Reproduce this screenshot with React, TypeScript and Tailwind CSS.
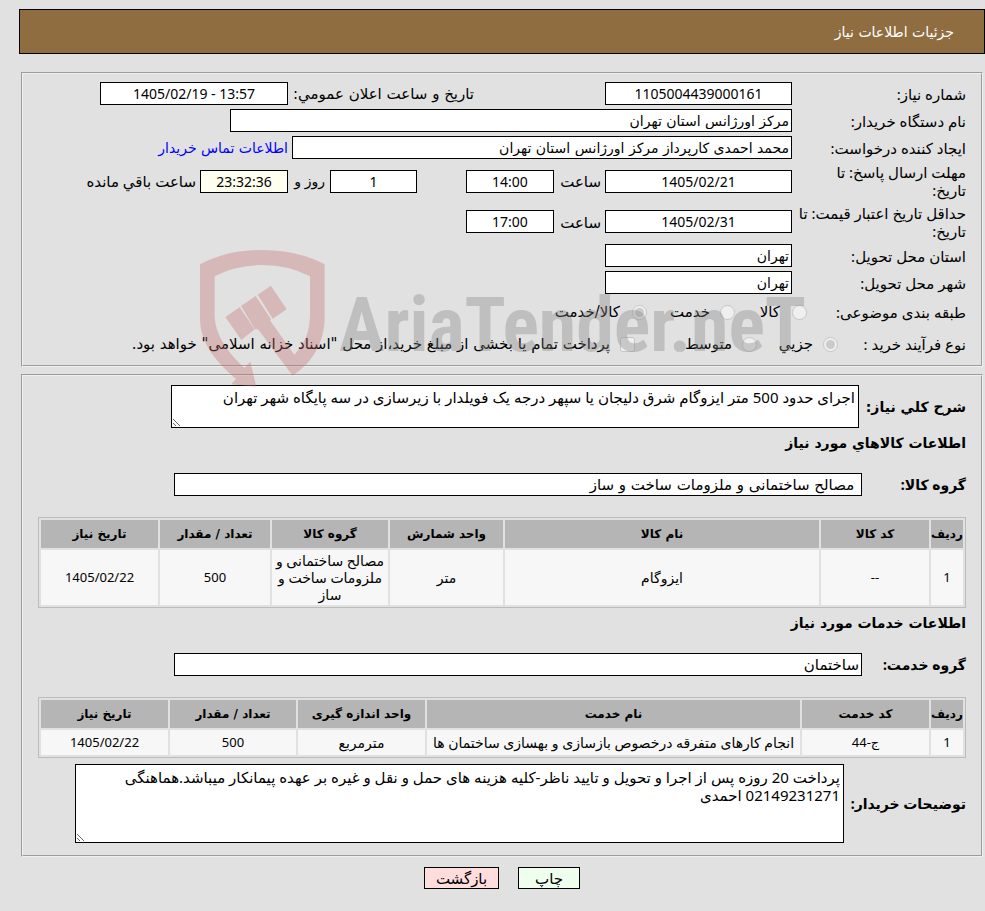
import React from 'react';
import { clsx } from 'clsx';

interface Column {
  title: string;
  width: string;
  numeric?: boolean;
}

const goodsColumns: Column[] = [
  { title: 'ردیف', width: 'w-[32px]', numeric: true },
  { title: 'کد کالا', width: 'w-[108px]', numeric: true },
  { title: 'نام کالا', width: '' },
  { title: 'واحد شمارش', width: 'w-[113px]' },
  { title: 'گروه کالا', width: 'w-[116px]' },
  { title: 'تعداد / مقدار', width: 'w-[110px]', numeric: true },
  { title: 'تاریخ نیاز', width: 'w-[117px]', numeric: true },
];

const goodsRows = [
  ['1', '--', 'ایزوگام', 'متر', 'مصالح ساختمانی و ملزومات ساخت و ساز', '500', '1405/02/22'],
];

const serviceColumns: Column[] = [
  { title: 'ردیف', width: 'w-[32px]', numeric: true },
  { title: 'کد خدمت', width: 'w-[127px]', numeric: true },
  { title: 'نام خدمت', width: '' },
  { title: 'واحد اندازه گیری', width: 'w-[127px]' },
  { title: 'تعداد / مقدار', width: 'w-[126px]', numeric: true },
  { title: 'تاریخ نیاز', width: 'w-[127px]', numeric: true },
];

const serviceRows = [
  ['1', 'ج-44', 'انجام کارهای متفرقه درخصوص بازسازی و بهسازی ساختمان ها', 'مترمربع', '500', '1405/02/22'],
];

interface FieldProps {
  id: string;
  value: string;
  className?: string;
  dir?: 'ltr' | 'rtl';
  numeric?: boolean;
}

function Field({ id, value, className, dir, numeric }: FieldProps) {
  return (
    <input
      id={id}
      dir={dir}
      type="text"
      readOnly
      defaultValue={value}
      className={clsx(
        'h-[23px] shrink-0 border border-black px-0.5',
        numeric ? 'text-center' : "font-['DejaVu_Sans',sans-serif]",
        className,
      )}
    />
  );
}

interface RowProps {
  label: string;
  htmlFor?: string;
  height: string;
  children: React.ReactNode;
}

function Row({ label, htmlFor, height, children }: RowProps) {
  return (
    <div className={clsx('flex items-center', height)}>
      <label htmlFor={htmlFor} className="w-[174px] shrink-0 whitespace-pre">
        {label}
      </label>
      {children}
    </div>
  );
}

interface ChoiceProps {
  type: 'radio' | 'checkbox';
  name: string;
  label: string;
  checked?: boolean;
  className?: string;
}

function Choice({ type, name, label, checked, className }: ChoiceProps) {
  return (
    <label className={clsx("flex shrink-0 items-center font-['DejaVu_Sans',sans-serif]", className)}>
      <input type={type} name={name} defaultChecked={checked} disabled className="size-[15px] shrink-0" />
      <span className="whitespace-nowrap">{label}</span>
    </label>
  );
}

function DataTable({ columns, rows }: { columns: Column[]; rows: string[][] }) {
  return (
    <table className="w-full table-fixed border-separate border-spacing-[2px] border border-[#bcbcbc] text-center leading-[17px]">
      <thead>
        <tr className="h-7 bg-[#b5b5b5] font-['DejaVu_Sans',sans-serif] text-[12px]">
          {columns.map((column) => (
            <th key={column.title} className={clsx('whitespace-nowrap font-bold', column.width)}>
              {column.title}
            </th>
          ))}
        </tr>
      </thead>
      <tbody>
        {rows.map((row) => (
          <tr key={row[0]} className="h-[25px] bg-[#f7f7f7]">
            {row.map((cell, i) => (
              <td
                key={columns[i].title}
                className={clsx('px-px py-[2px]', columns[i].numeric ? 'text-[13px]' : 'text-[14px]')}
              >
                {cell}
              </td>
            ))}
          </tr>
        ))}
      </tbody>
    </table>
  );
}

function Watermark() {
  return (
    <svg
      viewBox="0 0 620 140"
      aria-hidden="true"
      className="pointer-events-none absolute left-[200px] top-[250px] h-[140px] w-[620px] [direction:ltr]"
    >
      {/* shield and gavel, drawn on a 3x grid */}
      <g transform="scale(0.33333)" fill="rgb(197 108 113)" fillOpacity="0.35">
        <path d="M0 43 Q80 0 187 0 Q294 0 374 43 V200 C374 275 340 335 278 377 L174 238 L165 238 L123 168 L167 138 L213 208 L211 212 L283 314 C315 280 330 245 330 190 V79 Q265 45 187 45 Q109 45 44 79 V195 C44 250 80 305 133 353 L151 335 L169 410 L93 403 L108 387 C35 325 0 270 0 205 Z" />
        <path d="M76 201 L119 172 L164 238 L124 270 Z" />
        <path d="M173 134 L213 107 L260 178 L218 206 Z" />
      </g>
      <text
        x="139"
        y="101"
        fill="rgb(128 128 128)"
        fillOpacity="0.35"
        className="font-['Roboto_Condensed',Lato,sans-serif] text-[76px] font-bold"
      >
        AriaTender.neT
      </text>
    </svg>
  );
}

export default function App() {
  return (
    <div
      dir="rtl"
      className="relative min-h-screen bg-[#e1e1e1] pb-5 pl-[19px] pt-[9px] font-['Noto_Sans','DejaVu_Sans',sans-serif] text-[15px] leading-[18px] text-black"
    >
      <header className="flex h-[45px] items-center border border-black bg-[#8f6d41] px-[30px] font-['DejaVu_Sans',sans-serif] text-[14px] text-white">
        <h1>جزئیات اطلاعات نیاز</h1>
      </header>

      <main className="ml-0.5 mr-0.5 mt-[18px]">
        <fieldset className="border-2 border-[#f0f0f0] px-[15px] pb-[5px] pt-1.5 [border-style:groove]">
          <Row label="شماره نیاز:" htmlFor="number" height="h-[27px]">
            <Field id="number" value="1105004439000161" numeric className="w-[187px] bg-white text-[14px]" />
            <label
              htmlFor="announced"
              className="mr-[131px] w-[186px] shrink-0 whitespace-nowrap font-['DejaVu_Sans',sans-serif]"
            >
              تاریخ و ساعت اعلان عمومي:
            </label>
            <Field
              id="announced"
              dir="ltr"
              value="1405/02/19 - 13:57"
              numeric
              className="w-[188px] bg-white text-[14px]"
            />
          </Row>
          <Row label="نام دستگاه خریدار:" htmlFor="buyer" height="h-[27px]">
            <Field id="buyer" value="مرکز اورژانس استان تهران" className="w-[562px] bg-white text-[14px]" />
          </Row>
          <Row label="ایجاد کننده درخواست:" htmlFor="creator" height="h-[27px]">
            <Field
              id="creator"
              value="محمد احمدی کارپرداز مرکز اورژانس استان تهران"
              className="w-[500px] bg-white text-[14px]"
            />
            <a
              href="#contact"
              className="mr-1 whitespace-nowrap font-['DejaVu_Sans',sans-serif] text-[14px] text-[#0000ff]"
            >
              اطلاعات تماس خریدار
            </a>
          </Row>
          <Row label={'مهلت ارسال پاسخ: تا\nتاریخ:'} htmlFor="reply-date" height="h-10">
            <Field id="reply-date" value="1405/02/21" numeric className="w-[187px] bg-white text-[14px]" />
            <label htmlFor="reply-time" className="mr-1 w-[47px]">
              ساعت
            </label>
            <Field id="reply-time" value="14:00" numeric className="w-[88px] bg-white text-[14px]" />
            <Field id="days-left" value="1" numeric className="mr-[49px] w-[87px] bg-white text-[14px]" />
            <label htmlFor="days-left" className="mr-[5px] w-[37px] whitespace-nowrap text-[14px]">
              روز و
            </label>
            <Field id="time-left" value="23:32:36" numeric className="w-[88px] bg-[#fffff0] text-[14px]" />
            <label htmlFor="time-left" className="mr-1 whitespace-nowrap">
              ساعت باقي مانده
            </label>
          </Row>
          <Row label={'حداقل تاریخ اعتبار قیمت: تا\nتاریخ:'} htmlFor="price-date" height="h-[41px]">
            <Field id="price-date" value="1405/02/31" numeric className="w-[187px] bg-white text-[14px]" />
            <label htmlFor="price-time" className="mr-1 w-[47px]">
              ساعت
            </label>
            <Field id="price-time" value="17:00" numeric className="w-[88px] bg-white text-[14px]" />
          </Row>
          <Row label="استان محل تحویل:" htmlFor="province" height="h-[27px]">
            <Field id="province" value="تهران" className="w-[187px] bg-white text-[14px]" />
          </Row>
          <Row label="شهر محل تحویل:" htmlFor="city" height="h-[27px]">
            <Field id="city" value="تهران" className="w-[187px] bg-white text-[14px]" />
          </Row>
          <div className="flex h-8 items-center">
            <span className="w-[159px] shrink-0">طبقه بندی موضوعی:</span>
            <Choice type="radio" name="subject" label="کالا" className="w-[72px] gap-3" />
            <Choice type="radio" name="subject" label="خدمت" className="w-[88px] gap-2.5" />
            <Choice type="radio" name="subject" label="کالا/خدمت" checked className="gap-3" />
          </div>
          <div className="flex h-8 items-center">
            <span className="w-[128px] shrink-0">نوع فرآیند خرید :</span>
            <Choice type="radio" name="process" label="جزیي" checked className="w-[81px] gap-2.5" />
            <Choice type="radio" name="process" label="متوسط" className="w-[122px] gap-2.5" />
            <Choice
              type="checkbox"
              name="treasury"
              label={'پرداخت تمام یا بخشی از مبلغ خرید،از محل "اسناد خزانه اسلامی" خواهد بود.'}
              className="gap-2.5"
            />
          </div>
        </fieldset>

        <fieldset className="mt-[7px] border-2 border-[#f0f0f0] px-[15px] pb-3 pt-[9px] [border-style:groove]">
          <div className="flex items-center">
            <label
              htmlFor="summary"
              className="w-[107px] shrink-0 whitespace-nowrap font-['DejaVu_Sans',sans-serif] text-[14px] font-bold"
            >
              شرح كلي نیاز:
            </label>
            <textarea
              id="summary"
              readOnly
              className="block h-[43px] w-[688px] border border-black bg-white px-[3px] py-0.5"
              defaultValue="اجرای حدود 500 متر ایزوگام شرق دلیجان یا سپهر درجه یک فویلدار با زیرسازی در سه پایگاه شهر تهران"
            />
          </div>
          <h2 className="mt-1.5 font-['DejaVu_Sans',sans-serif] text-[14px] font-bold">اطلاعات كالاهاي مورد نیاز</h2>
          <div className="my-[21px] flex items-center">
            <label htmlFor="goods-group" className="w-[104px] shrink-0 text-[14px] font-bold">
              گروه کالا:
            </label>
            <Field
              id="goods-group"
              value=" مصالح ساختمانی و ملزومات ساخت و ساز"
              className="w-[688px] bg-white"
            />
          </div>
          <DataTable columns={goodsColumns} rows={goodsRows} />

          <h2 className="mt-1.5 font-['DejaVu_Sans',sans-serif] text-[14px] font-bold">اطلاعات خدمات مورد نیاز</h2>
          <div className="my-[21px] flex items-center">
            <label htmlFor="service-group" className="w-[104px] shrink-0 text-[14px] font-bold">
              گروه خدمت:
            </label>
            <Field id="service-group" value="ساختمان" className="w-[688px] bg-white" />
          </div>
          <DataTable columns={serviceColumns} rows={serviceRows} />

          <div className="mt-1.5 flex items-center">
            <label htmlFor="notes" className="w-[122px] shrink-0 whitespace-nowrap text-[14px] font-bold">
              توضیحات خریدار:
            </label>
            <textarea
              id="notes"
              readOnly
              className="block h-[79px] w-[769px] border border-black bg-white p-[3px]"
              defaultValue="پرداخت 20 روزه پس از اجرا و تحویل و تایید ناظر-کلیه هزینه های حمل و نقل و غیره بر عهده پیمانکار میباشد.هماهنگی 02149231271 احمدی"
            />
          </div>
        </fieldset>
      </main>

      <div className="mt-2.5 flex justify-center gap-[19px]">
        <button type="button" className="h-[22px] w-[62px] border border-black bg-[#eeffee]">
          چاپ
        </button>
        <button type="button" className="h-[22px] w-[75px] border border-black bg-[#ffdddd]">
          بازگشت
        </button>
      </div>

      <Watermark />
    </div>
  );
}
